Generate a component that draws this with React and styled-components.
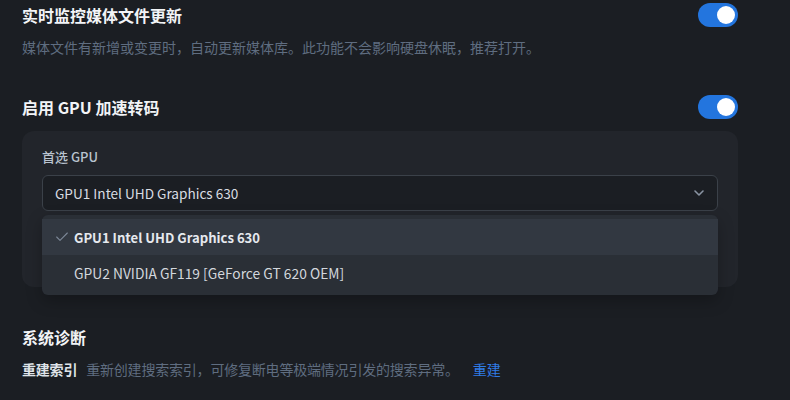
import React from 'react'
import styled, { createGlobalStyle } from 'styled-components'
import { ChevronDown, Check } from 'lucide-react'

const Global = createGlobalStyle`
  body {
    margin: 0;
    background: #1b1e23;
    font-family: "Noto Sans CJK SC", "Noto Sans", sans-serif;
  }
`

const Page = styled.div`
  width: 790px;
  height: 400px;
  box-sizing: border-box;
  padding: 3px 52px 0 22px;
  overflow: hidden;
`

const Row = styled.div`
  display: flex;
  align-items: center;
  justify-content: space-between;
  height: 24px;
  margin-top: ${props => props.top || 0}px;
`

const Title = styled.div`
  font-size: 16px;
  font-weight: 700;
  color: #f2f4f7;
  line-height: 24px;
  margin-top: ${props => props.top || 0}px;
`

const Desc = styled.div`
  margin-top: 10px;
  font-size: 14px;
  line-height: 20px;
  color: #5f6d80;
`

const Toggle = styled.div`
  width: 40px;
  height: 24px;
  border-radius: 12px;
  background: #2375de;
  display: flex;
  align-items: center;
  justify-content: flex-end;
  padding: 0 3px;
  box-sizing: border-box;
  &::after {
    content: '';
    width: 18px;
    height: 18px;
    border-radius: 50%;
    background: #fff;
  }
`

const Card = styled.div`
  margin-top: 12px;
  background: #22252b;
  border-radius: 12px;
  padding: 16px 20px 76px;
`

const Label = styled.div`
  font-size: 13px;
  line-height: 20px;
  font-weight: 500;
  color: #b9c3cf;
`

const SelectWrap = styled.div`
  position: relative;
  margin-top: 8px;
`

const Select = styled.div`
  height: 36px;
  box-sizing: border-box;
  border: 1px solid #3b4149;
  border-radius: 6px;
  background: #1b1e23;
  display: flex;
  align-items: center;
  justify-content: space-between;
  padding: 0 10px 0 12px;
  font-size: 13.6px;
  color: #d8dce2;
  svg {
    color: #8a94a3;
  }
`

const Menu = styled.div`
  position: absolute;
  top: calc(100% + 4px);
  left: 0;
  right: 0;
  background: #2a2f36;
  border-radius: 6px;
  padding: 4px 0;
  box-shadow: 0 6px 16px rgba(0, 0, 0, 0.25);
`

const Item = styled.div`
  height: 36px;
  display: flex;
  align-items: center;
  padding-left: 32px;
  position: relative;
  font-size: ${props => (props.selected ? 13.1 : 13.8)}px;
  font-weight: ${props => (props.selected ? 700 : 400)};
  color: ${props => (props.selected ? '#e6e9ee' : '#d3d7dd')};
  background: ${props => (props.selected ? '#323841' : 'transparent')};
  svg {
    position: absolute;
    left: 12px;
    color: #7d8898;
  }
`

const Line = styled.div`
  margin-top: 10px;
  display: flex;
  align-items: center;
  font-size: 14px;
  line-height: 20px;
  letter-spacing: -0.2px;
  color: #5f6d80;
`

const Strong = styled.span`
  font-weight: 700;
  color: #dfe3e8;
  margin-right: 9px;
`

const Link = styled.a`
  color: #2f7be6;
  margin-left: 14px;
  letter-spacing: 0;
  cursor: pointer;
`

export default function App() {
  return (
    <>
      <Global />
      <Page>
        <Row>
          <Title>实时监控媒体文件更新</Title>
          <Toggle />
        </Row>
        <Desc>媒体文件有新增或变更时，自动更新媒体库。此功能不会影响硬盘休眠，推荐打开。</Desc>
        <Row top={38}>
          <Title>启用 GPU 加速转码</Title>
          <Toggle />
        </Row>
        <Card>
          <Label>首选 GPU</Label>
          <SelectWrap>
            <Select>
              GPU1 Intel UHD Graphics 630
              <ChevronDown size={16} strokeWidth={2.4} />
            </Select>
            <Menu>
              <Item selected>
                <Check size={16} strokeWidth={1.6} />
                GPU1 Intel UHD Graphics 630
              </Item>
              <Item>GPU2 NVIDIA GF119 [GeForce GT 620 OEM]</Item>
            </Menu>
          </SelectWrap>
        </Card>
        <Title top={38}>系统诊断</Title>
        <Line>
          <Strong>重建索引</Strong>
          重新创建搜索索引，可修复断电等极端情况引发的搜索异常。
          <Link>重建</Link>
        </Line>
      </Page>
    </>
  )
}
